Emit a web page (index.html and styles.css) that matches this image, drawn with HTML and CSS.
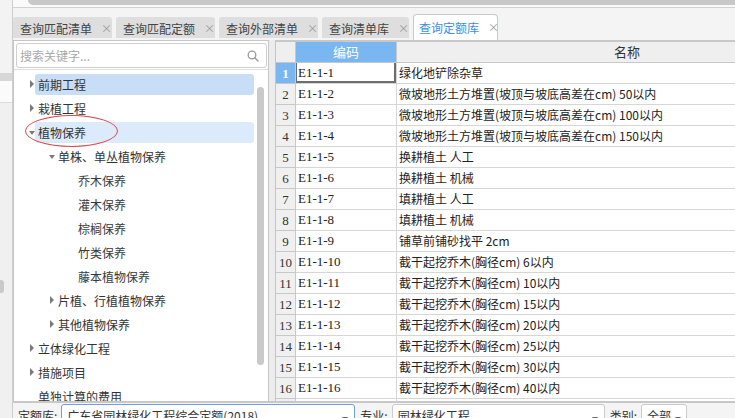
FILE: index.html
```html
<!DOCTYPE html>
<html lang="zh-CN">
<head>
<meta charset="utf-8">
<title>查询定额库</title>
<link rel="stylesheet" href="styles.css">
</head>
<body>
<div class="app">
  <div class="bgstrip">
    <div class="bg-a"></div>
    <div class="bg-b"></div>
    <div class="bg-c"></div>
    <div class="bg-d"><div class="bg-knob"></div></div>
  </div>
  <div class="dialog">
    <div class="topbar"><div class="topbar-fill"></div></div>
    <div class="tabs">
      <div class="tab"><span class="tab-text">查询匹配清单</span><span class="x">×</span></div>
      <div class="tab"><span class="tab-text">查询匹配定额</span><span class="x">×</span></div>
      <div class="tab"><span class="tab-text">查询外部清单</span><span class="x">×</span></div>
      <div class="tab"><span class="tab-text">查询清单库</span><span class="x">×</span></div>
      <div class="tab active"><span class="tab-text">查询定额库</span><span class="x">×</span></div>
    </div>
    <div class="main">
      <div class="leftpanel">
        <div class="search-wrap">
          <div class="search">
            <span class="ph">搜索关键字...</span>
            <svg class="mag" width="12" height="12" viewBox="0 0 12 12"><circle cx="5" cy="5" r="3.8" fill="none" stroke="#9a9a9a" stroke-width="1.3"/><path d="M7.8 7.8 L11 11" stroke="#9a9a9a" stroke-width="1.4" stroke-linecap="round"/></svg>
          </div>
        </div>
        <div class="tree-wrap">
          <div class="tree">
            <div class="node l1"><i class="tw right"></i><span class="label sel">前期工程</span></div>
            <div class="node l1"><i class="tw right"></i><span class="label">栽植工程</span></div>
            <div class="node l1"><i class="tw down"></i><span class="label hover">植物保养</span></div>
            <div class="node l2"><i class="tw down"></i><span class="label">单株、单丛植物保养</span></div>
            <div class="node l3"><span class="label">乔木保养</span></div>
            <div class="node l3"><span class="label">灌木保养</span></div>
            <div class="node l3"><span class="label">棕榈保养</span></div>
            <div class="node l3"><span class="label">竹类保养</span></div>
            <div class="node l3"><span class="label">藤本植物保养</span></div>
            <div class="node l2"><i class="tw right"></i><span class="label">片植、行植植物保养</span></div>
            <div class="node l2"><i class="tw right"></i><span class="label">其他植物保养</span></div>
            <div class="node l1"><i class="tw right"></i><span class="label">立体绿化工程</span></div>
            <div class="node l1"><i class="tw right"></i><span class="label">措施项目</span></div>
            <div class="node l1"><i class="tw none"></i><span class="label">单独计算的费用</span></div>
          </div>
          <div class="vscroll"><div class="thumb"></div></div>
        </div>
        <div class="ellipse"></div>
      </div>
      <div class="gutter"></div>
      <div class="grid">
        <div class="ghead">
          <div class="h-rn"></div>
          <div class="h-code">编码</div>
          <div class="h-name">名称</div>
        </div>
        <div class="row cur"><div class="rn">1</div><div class="code">E1-1-1</div><div class="name">绿化地铲除杂草</div></div>
        <div class="row"><div class="rn">2</div><div class="code">E1-1-2</div><div class="name">微坡地形土方堆置(坡顶与坡底高差在cm) 50以内</div></div>
        <div class="row"><div class="rn">3</div><div class="code">E1-1-3</div><div class="name">微坡地形土方堆置(坡顶与坡底高差在cm) 100以内</div></div>
        <div class="row"><div class="rn">4</div><div class="code">E1-1-4</div><div class="name">微坡地形土方堆置(坡顶与坡底高差在cm) 150以内</div></div>
        <div class="row"><div class="rn">5</div><div class="code">E1-1-5</div><div class="name">换耕植土 人工</div></div>
        <div class="row"><div class="rn">6</div><div class="code">E1-1-6</div><div class="name">换耕植土 机械</div></div>
        <div class="row"><div class="rn">7</div><div class="code">E1-1-7</div><div class="name">填耕植土 人工</div></div>
        <div class="row"><div class="rn">8</div><div class="code">E1-1-8</div><div class="name">填耕植土 机械</div></div>
        <div class="row"><div class="rn">9</div><div class="code">E1-1-9</div><div class="name">铺草前铺砂找平 2cm</div></div>
        <div class="row"><div class="rn">10</div><div class="code">E1-1-10</div><div class="name">截干起挖乔木(胸径cm) 6以内</div></div>
        <div class="row"><div class="rn">11</div><div class="code">E1-1-11</div><div class="name">截干起挖乔木(胸径cm) 10以内</div></div>
        <div class="row"><div class="rn">12</div><div class="code">E1-1-12</div><div class="name">截干起挖乔木(胸径cm) 15以内</div></div>
        <div class="row"><div class="rn">13</div><div class="code">E1-1-13</div><div class="name">截干起挖乔木(胸径cm) 20以内</div></div>
        <div class="row"><div class="rn">14</div><div class="code">E1-1-14</div><div class="name">截干起挖乔木(胸径cm) 25以内</div></div>
        <div class="row"><div class="rn">15</div><div class="code">E1-1-15</div><div class="name">截干起挖乔木(胸径cm) 30以内</div></div>
        <div class="row"><div class="rn">16</div><div class="code">E1-1-16</div><div class="name">截干起挖乔木(胸径cm) 40以内</div></div>
        <div class="row"><div class="rn"></div><div class="code"></div><div class="name"></div></div>
      </div>
    </div>
    <div class="bottom">
      <span class="blabel">定额库:</span>
      <div class="select focus s1"><span>广东省园林绿化工程综合定额(2018)</span><i class="caret"></i></div>
      <span class="blabel gap">专业:</span>
      <div class="select s2"><span>园林绿化工程</span><i class="caret"></i></div>
      <span class="blabel gap">类别:</span>
      <div class="select s3"><span>全部</span><i class="caret"></i></div>
    </div>
  </div>
</div>
</body>
</html>
```
FILE: styles.css
```css
* { box-sizing: border-box; margin: 0; padding: 0; }
html, body { width: 735px; height: 418px; overflow: hidden; }
body {
  font-family: "Noto Sans CJK SC", "Noto Sans", sans-serif;
  font-size: 12px;
  color: #333;
  background: #f0f0f0;
}
.app { display: flex; height: 418px; }

/* background window strip on the left */
.bgstrip { width: 13px; flex: none; border-right: 1px solid #cdcdcd; display: flex; flex-direction: column; }
.bg-a { height: 73px; background: #f3f3f3; }
.bg-b { height: 8px; background: #d7d7d7; }
.bg-c { height: 22px; background: #fbfbfb; border-bottom: 1px solid #dadada; }
.bg-d { flex: 1; background: #f0f0f0; padding-top: 177px; }
.bg-knob { width: 4px; height: 13px; background: #c9c9c9; border-radius: 0 3px 3px 0; }

/* dialog */
.dialog { flex: 1; min-width: 0; display: flex; flex-direction: column; background: #f4f4f4; }
.topbar { height: 8px; flex: none; border-bottom: 1px solid #d2d2d2; background: #fafafa; padding-left: 15px; }
.topbar-fill { height: 5px; background: #c8c8c8; border-bottom-left-radius: 5px; }

.tabs { height: 32px; flex: none; display: flex; align-items: flex-end; gap: 4px; background: #f4f4f4; }
.tab {
  height: 21px; margin-bottom: 2px; display: flex; align-items: center;
  padding: 2px 3px 0 7px; background: #dedede; border-radius: 3px 3px 0 0;
  color: #444; line-height: 19px; white-space: nowrap;
}
.tab .x { width: 8px; margin-left: 9px; color: #9a9a9a; font-size: 11px; text-align: center; }
.tab.active {
  height: 26px; margin-bottom: 0; background: #fff; color: #3b8ee6;
  border: 1px solid #c8c8c8; border-bottom: none; border-radius: 4px 4px 0 0;
  padding: 0 1px 0 5px; line-height: 21px;
}

.main { height: 361px; flex: none; display: flex; }

/* left tree panel */
.leftpanel {
  width: 256px; flex: none; position: relative; background: #fff;
  border: 1px solid #c6c6c6; border-bottom: none; display: flex; flex-direction: column;
}
.search-wrap { padding: 2px 1px 1px 2px; border-bottom: 1px solid #dedede; flex: none; }
.search {
  height: 25px; border: 1px solid #cfcfcf; border-radius: 3px; display: flex;
  align-items: center; justify-content: space-between; padding: 0 7px 0 3px;
}
.ph { color: #a9a9a9; line-height: 23px; }
.mag { display: block; }

.tree-wrap { flex: 1; display: flex; overflow: hidden; }
.tree { flex: 1; padding-top: 3px; }
.node { height: 24px; padding-top: 1px; display: flex; align-items: flex-start; }
.label { height: 21px; line-height: 21px; padding-left: 3px; border-radius: 3px; white-space: nowrap; }
.l1 .label { flex: 1; margin-right: 3px; }
.label.sel { background: #c8def6; }
.label.hover { background: #dcebfc; }
.l3 .label { padding-left: 64px; color: #3a3a3a; }

.tw { width: 6px; height: 21px; flex: none; position: relative; display: block; }
.l1 .tw { margin-left: 15px; }
.l2 .tw { margin-left: 35px; }
.tw.right::after {
  content: ""; position: absolute; left: 1px; top: 6px;
  border-left: 4px solid #7a7a7a; border-top: 4px solid transparent; border-bottom: 4px solid transparent;
}
.tw.down::after {
  content: ""; position: absolute; left: 0; top: 9px;
  border-top: 4px solid #7a7a7a; border-left: 3.5px solid transparent; border-right: 3.5px solid transparent;
}

.vscroll { width: 11px; flex: none; padding-top: 17px; }
.thumb { width: 7px; height: 278px; background: #c9c9c9; border-radius: 4px; }

.ellipse {
  position: absolute; left: 11px; top: 74px; width: 93px; height: 32px;
  border: 1px solid #e0474c; border-radius: 50%;
}

.gutter { width: 6px; flex: none; background: #ececec; }

/* data grid */
.grid {
  flex: 1; min-width: 0; overflow: hidden; background: #fff;
  border-top: 2px solid #c8c8c8; border-left: 1px solid #c4c4c4;
}
.ghead { display: flex; height: 21px; border-bottom: 1px solid #c8c8c8; }
.h-rn { width: 20px; flex: none; background: #efefef; border-right: 1px solid #c8c8c8; }
.h-code {
  width: 101px; flex: none; background: #7ab6ef; color: #fff; text-align: center;
  line-height: 20px; font-size: 13px; border-right: 1px solid #c8c8c8;
}
.h-name { width: 460px; flex: none; background: #efefef; text-align: center; line-height: 20px; font-size: 13px; color: #333; }

.row { display: flex; height: 21px; }
.rn {
  width: 20px; flex: none; background: #f0f0f0; text-align: center;
  border-right: 1px solid #c8c8c8; border-bottom: 1px solid #c8c8c8;
  font-family: "Liberation Serif", serif; font-size: 13px; line-height: 21px; color: #333;
}
.code {
  width: 101px; flex: none; padding-left: 2px;
  border-right: 1px solid #d6d6d6; border-bottom: 1px solid #d6d6d6;
  font-family: "Liberation Serif", serif; font-size: 13px; line-height: 20px; color: #222;
}
.name {
  width: 460px; flex: none; padding-left: 2px; border-bottom: 1px solid #d6d6d6;
  line-height: 20px; color: #222; white-space: nowrap;
}
.row.cur .rn { background: #7ab6ef; color: #fff; font-weight: bold; }
.row.cur .code { box-shadow: inset 1px 0 0 #6e6e6e, inset -2px -2px 0 #6e6e6e; }

/* bottom filter bar */
.bottom {
  flex: 1; min-height: 0; overflow: hidden; display: flex; align-items: flex-start;
  padding-left: 5px; border-top: 2px solid #c8c8c8; background: #f4f4f4;
}
.blabel { line-height: 22px; margin-top: 2px; color: #333; white-space: nowrap; }
.blabel.gap { margin-left: 5px; }
.select {
  height: 24px; margin-top: 1px; margin-left: 4px; flex: none; background: #fff;
  border: 1px solid #cbcbcb; border-radius: 3px; display: flex; align-items: center;
  justify-content: space-between; padding: 0 6px 0 5px; line-height: 22px; white-space: nowrap;
}
.select.focus { border-color: #6e9fdf; }
.s1 { width: 294px; }
.s2 { width: 213px; }
.s3 { width: 46px; padding-right: 5px; }
.caret {
  width: 0; height: 0; border-top: 4px solid #666;
  border-left: 3px solid transparent; border-right: 3px solid transparent; margin-top: 6px;
}
```
